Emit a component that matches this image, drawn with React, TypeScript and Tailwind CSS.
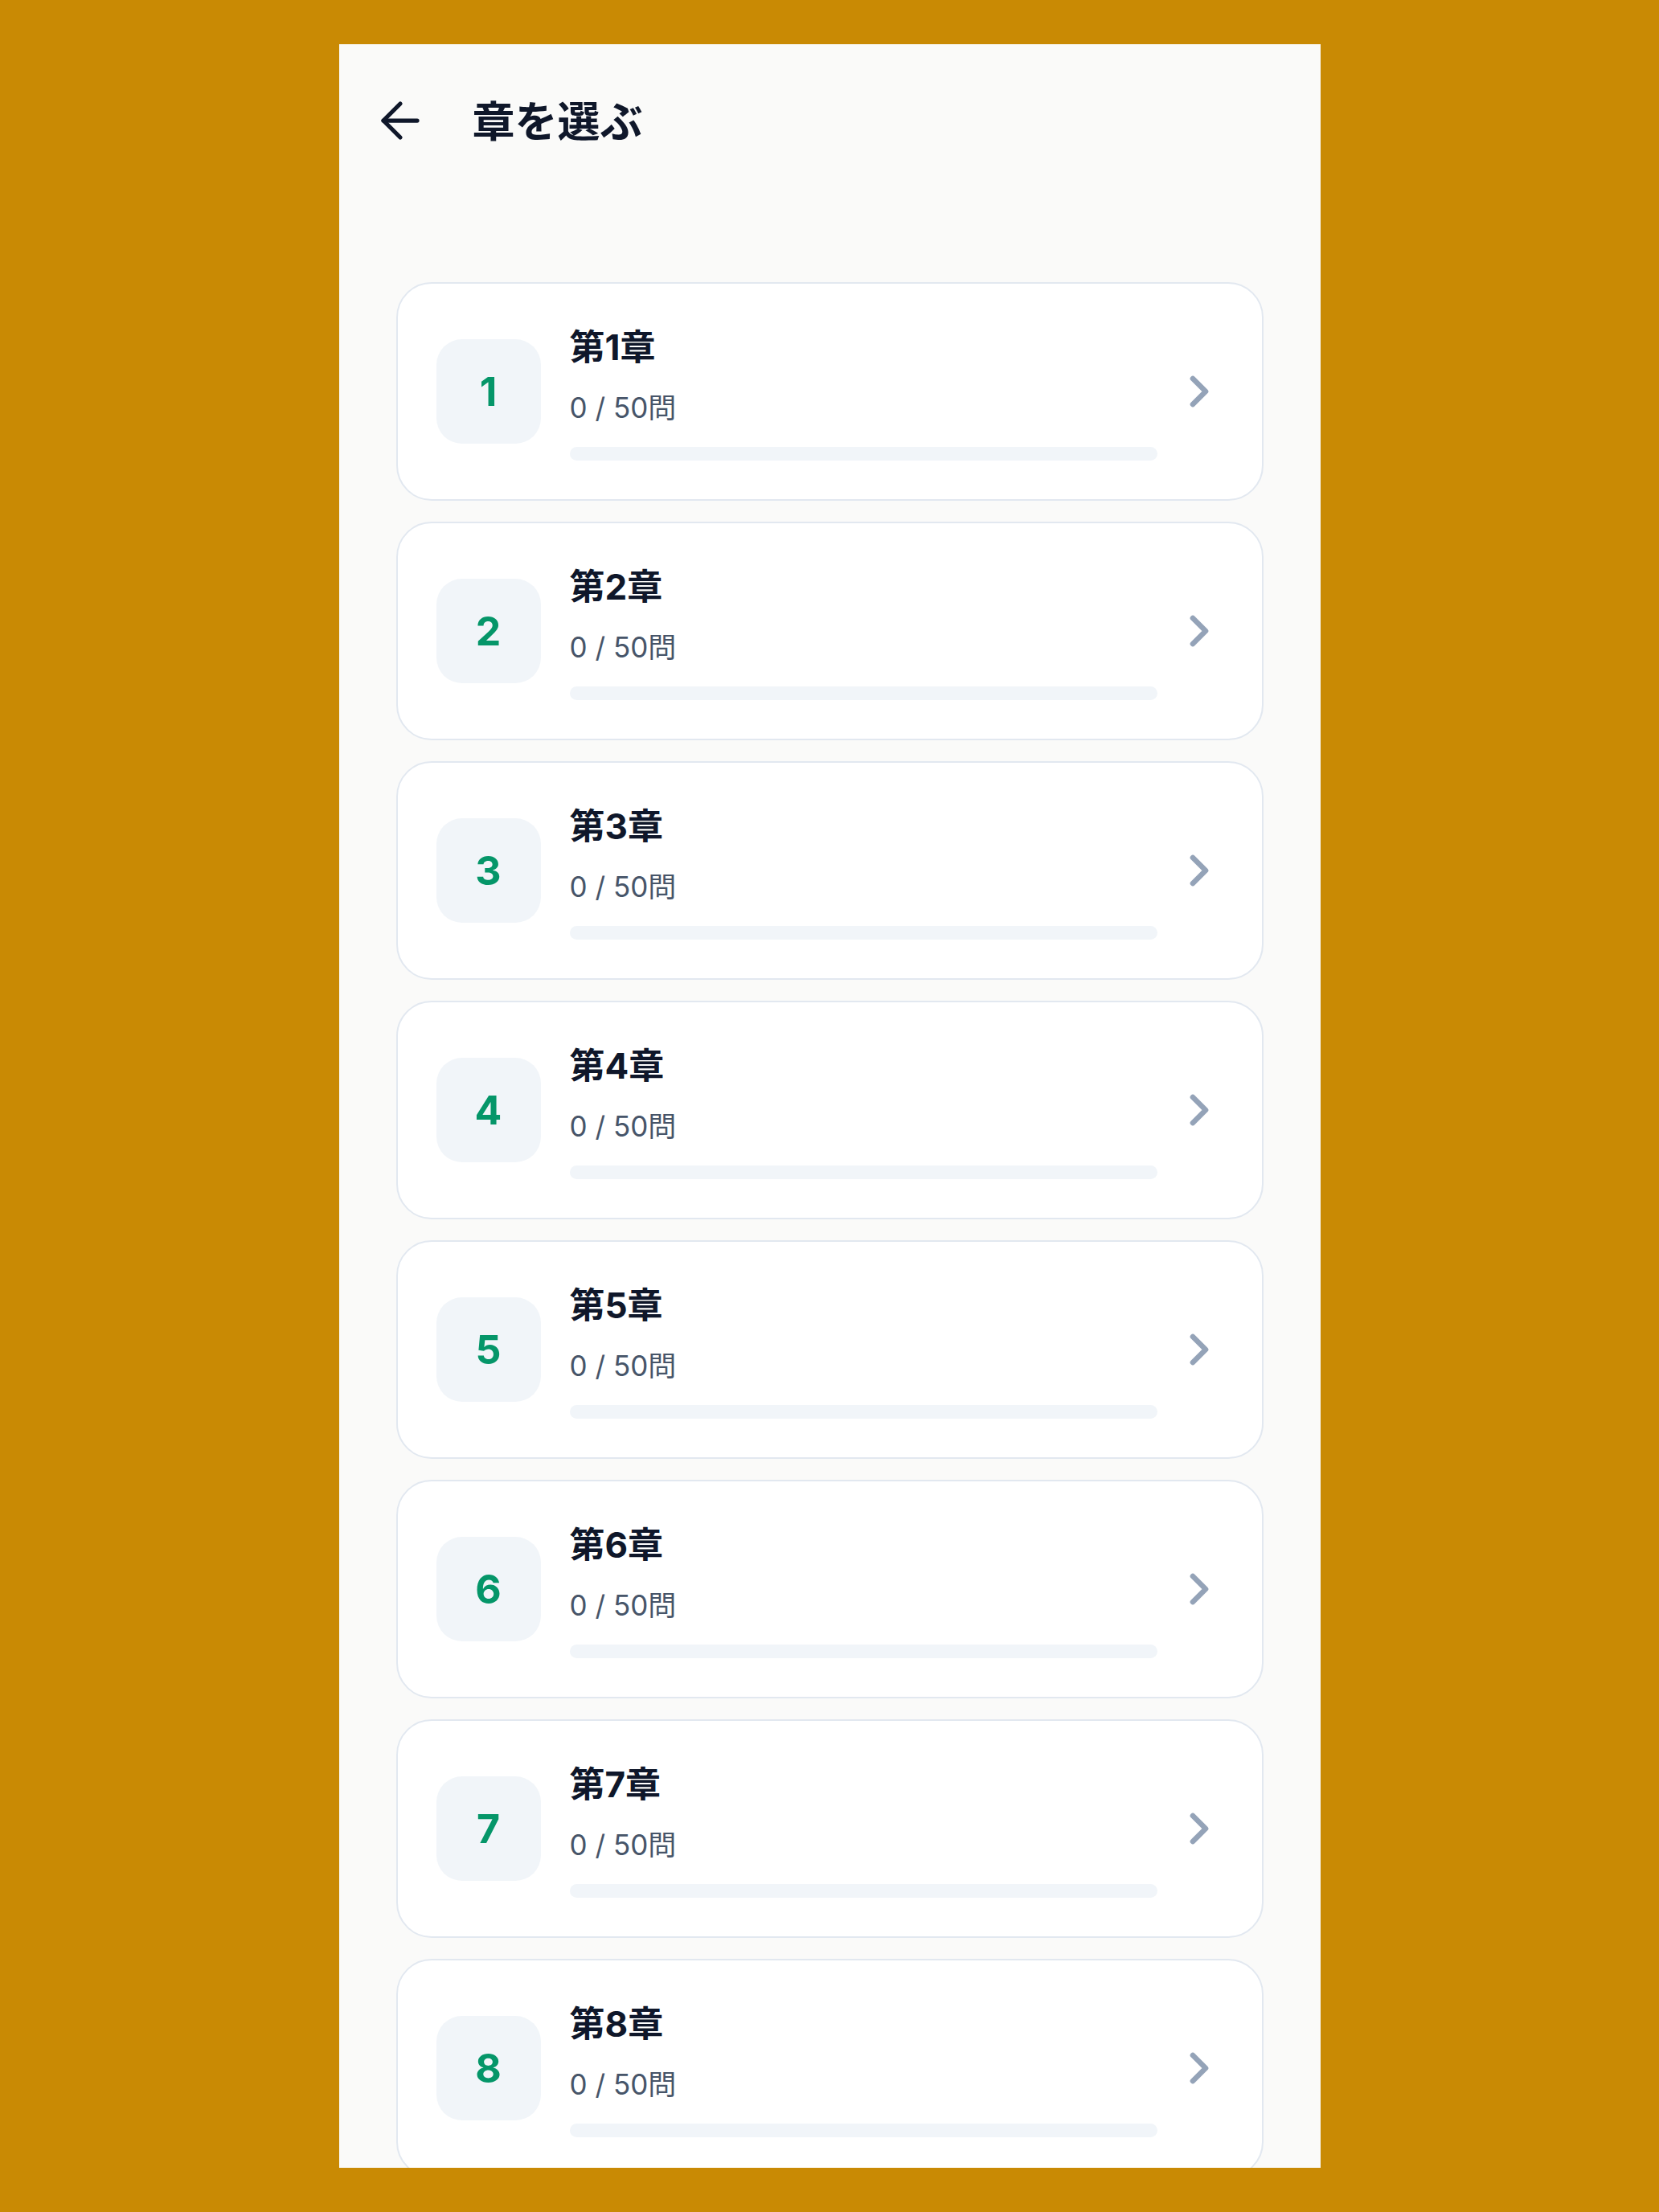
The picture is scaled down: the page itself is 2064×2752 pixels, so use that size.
import { ArrowLeft, ChevronRight } from 'lucide-react';

const chapters = Array.from({ length: 8 }, (_, i) => ({
  id: i + 1,
  title: `第${i + 1}章`,
  done: 0,
  total: 50,
}));

function ChapterCard({ id, title, done, total }: { id: number; title: string; done: number; total: number }) {
  return (
    <button className="flex h-[272px] w-full shrink-0 items-center rounded-[44px] border-2 border-[#e2e8f0] bg-white pl-[48px] pr-[46px] text-left">
      <div className="flex h-[130px] w-[130px] shrink-0 items-center justify-center rounded-[32px] bg-[#f1f5f9] text-[50px] font-bold text-[#059669]">
        {id}
      </div>
      <div className="ml-[36px] flex min-w-0 flex-1 flex-col">
        <div className="text-[44px] leading-[62px] font-bold text-[#0f172a]">{title}</div>
        <div className="mt-[22px] text-[35px] leading-[44px] text-[#475569]">
          {done} / {total}問
        </div>
        <div className="mt-[27px] h-[17px] w-full rounded-full bg-[#f1f5f9]">
          <div className="h-full rounded-full bg-[#059669]" style={{ width: `${(done / total) * 100}%` }} />
        </div>
      </div>
      <ChevronRight className="ml-[20px] shrink-0 text-[#94a3b8]" size={64} strokeWidth={2.5} />
    </button>
  );
}

export default function App() {
  return (
    <div className="flex min-h-screen items-center justify-center bg-[#c98a04] py-[55px] font-['Inter','Noto_Sans_CJK_JP',sans-serif]">
      <div className="flex h-[2642px] w-[1221px] flex-col overflow-hidden bg-[#fafaf9]">
        <header className="flex items-center pl-[40px] pt-[57px]">
          <ArrowLeft className="shrink-0 text-[#0f172a]" size={72} strokeWidth={1.75} />
          <h1 className="ml-[54px] mt-[4px] text-[53px] leading-[72px] font-bold text-[#0f172a]">章を選ぶ</h1>
        </header>

        <div className="mt-[163px] flex flex-col gap-[26px] px-[71px]">
          {chapters.map((c) => (
            <ChapterCard key={c.id} {...c} />
          ))}
        </div>
      </div>
    </div>
  );
}
